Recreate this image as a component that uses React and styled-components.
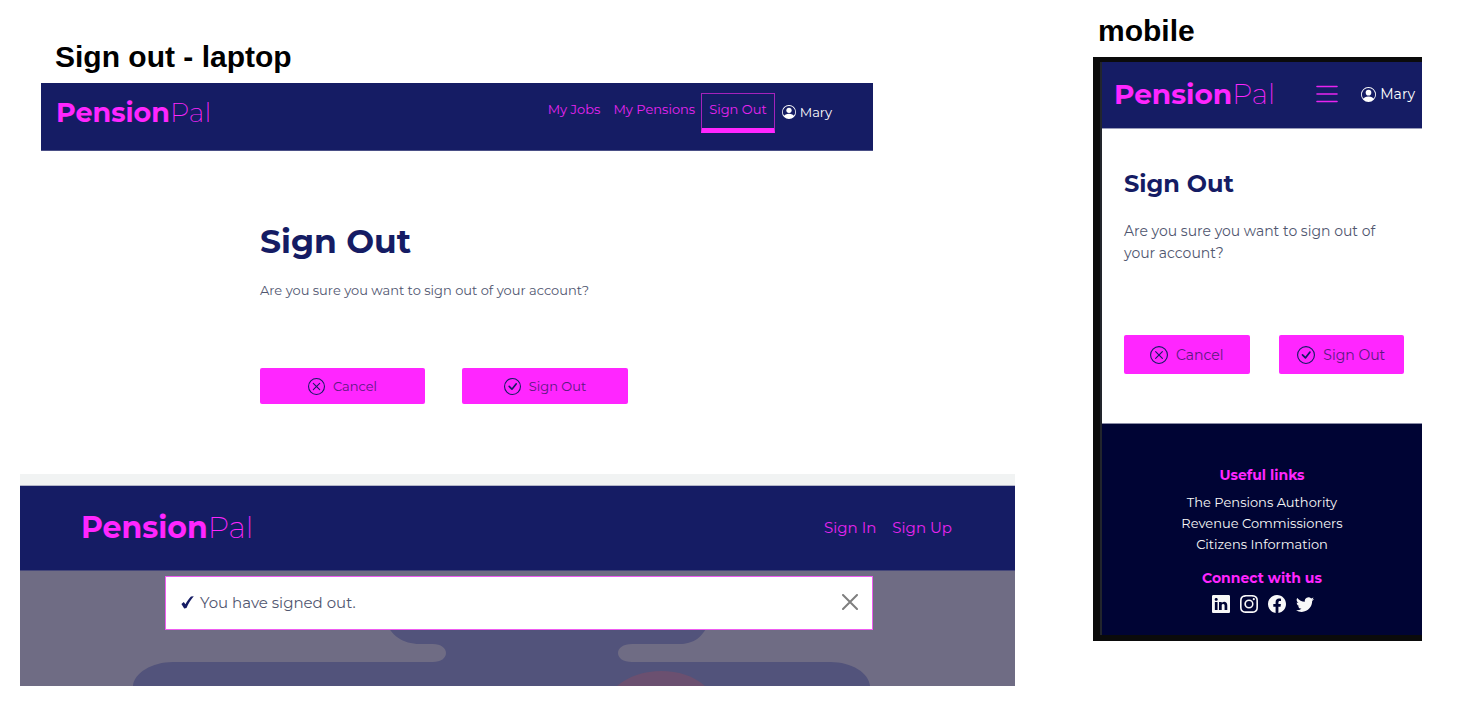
import React from "react";
import styled, { createGlobalStyle } from "styled-components";
import {
  BsCheckCircle,
  BsFacebook,
  BsInstagram,
  BsLinkedin,
  BsPersonCircle,
  BsTwitter,
  BsXCircle,
} from "react-icons/bs";

const navy = "#151c64";
const magenta = "#ff26ff";
const ink = "#50566f";

const GlobalStyle = createGlobalStyle`
  *, *::before, *::after { box-sizing: border-box; }
  body {
    margin: 0;
    background: #fff;
    color: ${ink};
    font-family: Montserrat, Inter, "Liberation Sans", sans-serif;
  }
  h1, h2, h3, p, ul { margin: 0; padding: 0; }
  ul { list-style: none; }
  a { color: inherit; text-decoration: none; }
  button { font: inherit; cursor: pointer; }
  svg { display: block; flex: none; }
`;

const Board = styled.div`
  display: grid;
  grid-template-columns: minmax(0, 995fr) minmax(0, 329fr);
  column-gap: 78px;
  align-items: start;
  padding: 0 54px 30px 20px;
`;

const Column = styled.section`
  display: flex;
  flex-direction: column;
  padding-top: ${(p) => p.$top}px;
`;

const Caption = styled.h2`
  padding-left: ${(p) => p.$indent}px;
  color: #000;
  font: 700 30px/34px "Liberation Sans", Arial, sans-serif;
`;

const Laptop = styled.div`
  margin: 9px 142px 0 21px;
`;

const TopBar = styled.header`
  display: flex;
  justify-content: space-between;
  background: ${navy};
  color: ${magenta};
`;

const LaptopBar = styled(TopBar)`
  height: 68px;
  padding: 10px 41px 0 15px;
  border-bottom: 1px solid #4a4f86;
`;

const Brand = styled.a`
  font-size: ${(p) => p.$size}px;
  font-weight: 700;
  line-height: 40px;
  white-space: nowrap;

  span { font-weight: 200; }
`;

const Nav = styled.nav`
  display: flex;
  align-items: flex-start;
  gap: ${(p) => p.$gap}px;
  font-size: ${(p) => p.$size}px;
  line-height: 20px;
  color: #e824f0;
  white-space: nowrap;
`;

const NavLink = styled.a`
  padding: 6px 6px 7px 7px;
`;

const ActiveLink = styled(NavLink)`
  height: 40px;
  padding: 5px 7px;
  border: 1px solid #a422bb;
  border-bottom: 5px solid ${magenta};
`;

const User = styled.a`
  display: flex;
  align-items: center;
  gap: 4px;
  color: #fff;
  font-size: ${(p) => p.$size}px;
  line-height: 20px;
`;

const NavUser = styled(User)`
  padding: 9px 0 0 7px;
`;

const LaptopMain = styled.main`
  padding: 69px 0 70px 219px;
`;

const Heading = styled.h1`
  color: ${navy};
  font-size: ${(p) => p.$size}px;
  font-weight: 700;
  line-height: 42px;
`;

const Question = styled.p`
  margin-top: ${(p) => p.$gap}px;
  font-size: ${(p) => p.$size}px;
  line-height: 22px;
`;

const Actions = styled.div`
  display: grid;
  grid-template-columns: ${(p) => p.$columns};
  column-gap: ${(p) => p.$gap}px;
  margin-top: ${(p) => p.$top}px;
`;

const ActionButton = styled.button`
  display: flex;
  align-items: center;
  justify-content: center;
  gap: 8px;
  height: ${(p) => p.$height}px;
  padding: 0;
  border: 0;
  border-radius: 2px;
  background: ${magenta};
  color: #5b1a80;
  font-size: ${(p) => p.$size}px;

  svg { color: ${navy}; }
`;

const Landing = styled.div`
  border-top: 11px solid #f1f3f3;
`;

const LandingBar = styled(TopBar)`
  height: 86px;
  align-items: center;
  padding: 0 63px 0 61px;
  border-top: 1px solid #b4b6c8;
  border-bottom: 1px solid #45477a;
`;

const Hero = styled.div`
  position: relative;
  height: 115px;
  padding: 5px 142px 0 145px;
  background: #6f6c84;
`;

const HeroArt = styled.svg`
  position: absolute;
  inset: 0;
  width: 100%;
  height: 100%;
`;

const Alert = styled.div`
  position: relative;
  display: flex;
  align-items: center;
  height: 54px;
  padding: 0 14px 2px 15px;
  border: 1px solid #ee5cf0;
  background: #fff;
  font-size: 15px;

  p { margin-left: 6px; }
`;

const CloseButton = styled.button`
  margin-left: auto;
  padding: 0;
  border: 0;
  background: none;
  color: #7f7f7f;
`;

const Phone = styled.div`
  margin-top: 9px;
  border: solid #0b0b0b;
  border-width: 5px 0 6px 7px;
`;

const Screen = styled.div`
  border-left: 2px solid #22252c;
`;

const PhoneBar = styled(TopBar)`
  height: 67px;
  align-items: center;
  padding: 0 7px 2px 12px;
  border-bottom: 1px solid #9a9cba;
`;

const MenuButton = styled.button`
  margin-left: auto;
  margin-right: 23px;
  padding: 0;
  border: 0;
  background: none;
  color: #e824f0;
`;

const PhoneMain = styled.main`
  padding: 34px 18px 49px 22px;
`;

const Footer = styled.footer`
  padding: 40px 0 22px;
  border-top: 1px solid #8a8ca6;
  background: #000434;
  color: #f8f8f8;
  text-align: center;
`;

const FooterTitle = styled.h3`
  color: ${magenta};
  font-size: 14px;
  font-weight: 700;
  line-height: 22px;
`;

const FooterLinks = styled.ul`
  margin: 6px 0 12px;
  font-size: 13px;
  line-height: 21px;
`;

const Social = styled.div`
  display: flex;
  justify-content: center;
  gap: 10px;
  margin: 6px 0 0 2px;
`;

function Logo({ size }) {
  return (
    <Brand href="#home" $size={size}>
      Pension<span>Pal</span>
    </Brand>
  );
}

function ConfirmActions({ columns, gap, top, height, size, icon }) {
  return (
    <Actions $columns={columns} $gap={gap} $top={top}>
      <ActionButton type="button" $height={height} $size={size}>
        <BsXCircle size={icon} />
        Cancel
      </ActionButton>
      <ActionButton type="button" $height={height} $size={size}>
        <BsCheckCircle size={icon} />
        Sign Out
      </ActionButton>
    </Actions>
  );
}

export default function App() {
  return (
    <>
      <GlobalStyle />
      <Board>
        <Column $top={40}>
          <Caption $indent={35}>Sign out - laptop</Caption>
          <Laptop>
            <LaptopBar>
              <Logo size={27} />
              <Nav $gap={0} $size={13}>
                <NavLink href="#jobs">My Jobs</NavLink>
                <NavLink href="#pensions">My Pensions</NavLink>
                <ActiveLink href="#sign-out" aria-current="page">Sign Out</ActiveLink>
                <NavUser href="#account" $size={13}>
                  <BsPersonCircle size={14} />
                  Mary
                </NavUser>
              </Nav>
            </LaptopBar>
            <LaptopMain>
              <Heading $size={33}>Sign Out</Heading>
              <Question $gap={17} $size={13}>Are you sure you want to sign out of your account?</Question>
              <ConfirmActions columns="165px 166px" gap={37} top={67} height={36} size={13} icon={17} />
            </LaptopMain>
          </Laptop>
          <Landing>
            <LandingBar>
              <Logo size={30} />
              <Nav $gap={16} $size={15}>
                <a href="#sign-in">Sign In</a>
                <a href="#sign-up">Sign Up</a>
              </Nav>
            </LandingBar>
            <Hero>
              <HeroArt viewBox="0 0 995 115" preserveAspectRatio="none" aria-hidden="true">
                <path
                  fill="#52537b"
                  d="M366 50 C370 64 383 73 400 73 H413 C421 73 426 77 426 82 C426 87 421 91 413 91 H153 C132 91 114 102 113 115 H850 C849 102 832 91 810 91 H612 C603 91 598 87 598 82 C598 77 603 73 612 73 H660 C672 73 684 67 689 50 Z"
                />
                <path fill="#6b5070" d="M597 115 C620 95 663 95 685 115 Z" />
              </HeroArt>
              <Alert role="status">
                <svg width="13" height="13" viewBox="0 0 13 13" aria-hidden="true">
                  <path fill={navy} d="M0.4 8 L2.8 6 L4.4 8.2 C6.4 4.6 8.2 2 10 0.4 L12.8 0.2 C9.7 3.6 7.4 7.4 5.5 12 L3.2 12.4 Z" />
                </svg>
                <p>You have signed out.</p>
                <CloseButton type="button" aria-label="Close">
                  <svg width="16" height="16" viewBox="0 0 16 16" stroke="currentColor" strokeWidth="2" strokeLinecap="round">
                    <path d="M1 1 L15 15 M15 1 L1 15" />
                  </svg>
                </CloseButton>
              </Alert>
            </Hero>
          </Landing>
        </Column>

        <Column $top={14}>
          <Caption $indent={5}>mobile</Caption>
          <Phone>
            <Screen>
              <PhoneBar>
                <Logo size={28} />
                <MenuButton type="button" aria-label="Menu">
                  <svg width="22" height="18" viewBox="0 0 22 18" stroke="currentColor" strokeWidth="1.6" strokeLinecap="round">
                    <path d="M1 1.5 H21 M1 9 H21 M1 16.5 H21" />
                  </svg>
                </MenuButton>
                <User href="#account" $size={14}>
                  <BsPersonCircle size={15} />
                  Mary
                </User>
              </PhoneBar>
              <PhoneMain>
                <Heading $size={24}>Sign Out</Heading>
                <Question $gap={15} $size={14}>Are you sure you want to sign out of your account?</Question>
                <ConfirmActions columns="1fr 1fr" gap={29} top={71} height={39} size={14} icon={18} />
              </PhoneMain>
              <Footer>
                <FooterTitle>Useful links</FooterTitle>
                <FooterLinks>
                  <li><a href="#authority">The Pensions Authority</a></li>
                  <li><a href="#revenue">Revenue Commissioners</a></li>
                  <li><a href="#citizens">Citizens Information</a></li>
                </FooterLinks>
                <FooterTitle>Connect with us</FooterTitle>
                <Social>
                  <a href="#linkedin" aria-label="LinkedIn"><BsLinkedin size={18} /></a>
                  <a href="#instagram" aria-label="Instagram"><BsInstagram size={18} /></a>
                  <a href="#facebook" aria-label="Facebook"><BsFacebook size={18} /></a>
                  <a href="#twitter" aria-label="Twitter"><BsTwitter size={18} /></a>
                </Social>
              </Footer>
            </Screen>
          </Phone>
        </Column>
      </Board>
    </>
  );
}
